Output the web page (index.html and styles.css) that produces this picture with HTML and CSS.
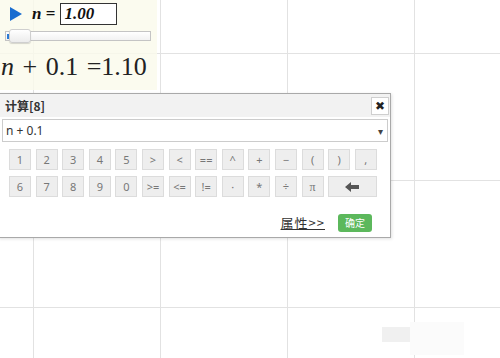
FILE: index.html
```html
<!DOCTYPE html>
<html lang="zh">
<head>
  <meta charset="UTF-8">
  <title>计算</title>
  <link rel="stylesheet" href="styles.css">
</head>
<body>
<div class="canvas">
  <div class="slider-panel">
    <div class="var-row">
      <span class="play"></span>
      <span class="var-name"><i>n</i> =</span>
      <span class="var-box">1.00</span>
    </div>
    <div class="slider">
      <span class="slider-fill"></span>
      <span class="slider-thumb"></span>
    </div>
    <div class="formula"><i>n</i> + 0.1 =1.10</div>
  </div>

  <div class="calc-dialog">
    <div class="calc-head">
      <span class="calc-title">计算[8]</span>
      <button class="calc-close" aria-label="关闭">✖</button>
    </div>
    <div class="calc-input">
      <span>n + 0.1</span>
      <span class="calc-caret">▾</span>
    </div>
    <div class="keypad">
      <button class="key">1</button>
      <button class="key">2</button>
      <button class="key">3</button>
      <button class="key">4</button>
      <button class="key">5</button>
      <button class="key">&gt;</button>
      <button class="key">&lt;</button>
      <button class="key">==</button>
      <button class="key">^</button>
      <button class="key">+</button>
      <button class="key">−</button>
      <button class="key">(</button>
      <button class="key">)</button>
      <button class="key">,</button>
      <button class="key">6</button>
      <button class="key">7</button>
      <button class="key">8</button>
      <button class="key">9</button>
      <button class="key">0</button>
      <button class="key">&gt;=</button>
      <button class="key">&lt;=</button>
      <button class="key">!=</button>
      <button class="key">·</button>
      <button class="key">*</button>
      <button class="key">÷</button>
      <button class="key key-pi">π</button>
      <button class="key key-back" aria-label="退格">
        <svg width="15" height="10" viewBox="0 0 15 10"><path d="M0 5 L6 0 L6 3 L14 3 L14 7 L6 7 L6 10 Z" fill="#555"/></svg>
      </button>
    </div>
    <div class="calc-foot">
      <a class="prop-link" href="#">属性&gt;&gt;</a>
      <button class="ok-btn">确定</button>
    </div>
  </div>

  <div class="watermark">
    <span class="wm-a"></span>
    <span class="wm-b"></span>
  </div>
</div>
</body>
</html>
```

FILE: styles.css
```css
html,body{margin:0;padding:0;background:#fff;}
body{font-family:"Noto Sans","Noto Sans CJK SC",sans-serif;overflow:hidden;}

.canvas{position:relative;width:500px;height:358px;overflow:hidden;
  background-color:#fff;
  background-image:linear-gradient(to right,#e2e2e2 1px,transparent 1px),linear-gradient(to bottom,#e2e2e2 1px,transparent 1px);
  background-size:127px 127px;
  background-position:33px 53px;}

.slider-panel{width:157px;height:90px;background:rgba(250,250,236,.82);box-sizing:border-box;padding-top:3px;}
.var-row{display:flex;align-items:center;height:22px;}
.play{width:0;height:0;margin-left:10px;border-top:7px solid transparent;border-bottom:7px solid transparent;border-left:12px solid #1a6dd0;}
.var-name{margin-left:10px;font-family:"Liberation Serif",serif;font-weight:bold;font-size:17px;color:#111;}
.var-name i{font-style:italic;}
.var-box{margin-left:5px;width:57px;height:22px;box-sizing:border-box;border:1.5px solid #333;font-family:"Liberation Serif",serif;font-weight:bold;font-style:italic;font-size:17px;line-height:19px;padding-left:3px;color:#111;background:#fff;}

.slider{position:relative;margin:6px 0 0 5px;width:146px;height:10px;box-sizing:border-box;border:1px solid #c4c4c4;background:linear-gradient(#fff,#f2f2f2);}
.slider-fill{position:absolute;left:1px;top:2px;width:6px;height:5px;background:#2a7bd6;}
.slider-thumb{position:absolute;left:3px;top:-3px;width:22px;height:14px;box-sizing:border-box;border:1px solid #cfcfcf;border-radius:3px;background:linear-gradient(#fff,#ececec);box-shadow:0 1px 1px rgba(0,0,0,.15);}

.formula{margin:11px 0 0 1px;font-family:"Liberation Serif",serif;font-size:26px;line-height:30px;word-spacing:2px;color:#222;white-space:nowrap;}
.formula i{font-style:italic;}

.calc-dialog{margin:3px 0 0 -2px;width:393px;height:145px;box-sizing:border-box;border:1px solid #a9a9a9;background:#fff;box-shadow:1px 1px 3px rgba(0,0,0,.12);}
.calc-head{display:flex;align-items:center;justify-content:space-between;height:23px;background:#f2f2f2;padding:0 1px 0 6px;}
.calc-title{font-family:"Noto Sans CJK SC",sans-serif;font-weight:bold;font-size:12px;color:#333;}
.calc-close{width:18px;height:18px;padding:0;border:1px solid #cfcfcf;background:#fff;font-size:12px;line-height:14px;color:#222;font-family:"DejaVu Sans",sans-serif;}

.calc-input{display:flex;align-items:center;justify-content:space-between;margin:2px 2px 0 3px;height:23px;box-sizing:border-box;border:1px solid #cccccc;padding:0 4px 0 3px;font-size:12px;color:#333;}
.calc-caret{font-size:10px;color:#444;}

.keypad{display:grid;grid-template-columns:repeat(14,22px);column-gap:4.6px;row-gap:6px;margin:7px 0 0 10px;}
.key{height:21px;padding:0;border:1px solid #dcdcdc;background:#eeeeee;color:#777;font-family:"Noto Sans",sans-serif;font-size:11px;line-height:18px;}
.key-pi{font-family:"Liberation Serif",serif;font-size:12px;}
.key-back{grid-column:span 2;display:flex;align-items:center;justify-content:center;}

.calc-foot{display:flex;justify-content:flex-end;align-items:center;gap:13px;margin:16px 18px 0 0;}
.prop-link{font-family:"Noto Sans CJK SC",sans-serif;font-size:13px;letter-spacing:1px;color:#333;text-decoration:underline;}
.ok-btn{width:34px;height:18px;padding:0;border:none;border-radius:3px;background:#5cb85c;color:#fff;font-family:"Noto Sans CJK SC",sans-serif;font-size:10px;line-height:18px;}

.watermark{position:absolute;left:382px;top:322px;width:84px;height:34px;}
.wm-a{position:absolute;left:0;top:5px;width:28px;height:15px;background:#f0f0f0;}
.wm-b{position:absolute;left:28px;top:0;width:54px;height:33px;background:#fbfbfb;}
```
